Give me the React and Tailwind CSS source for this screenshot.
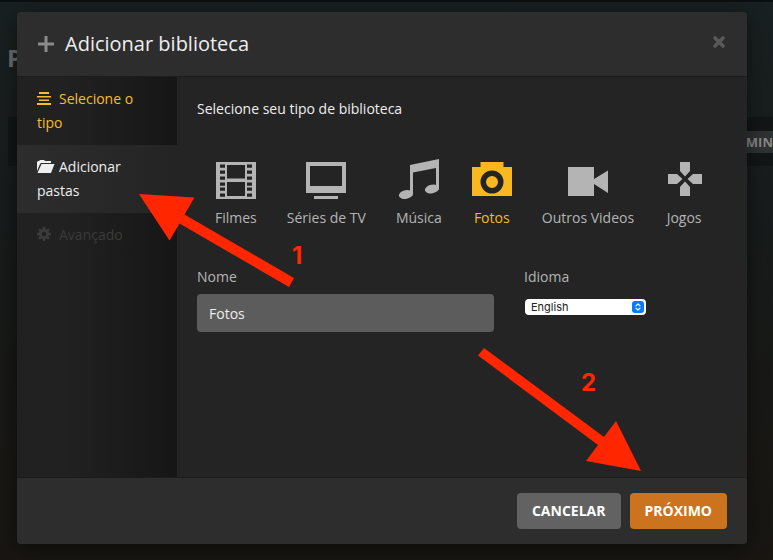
import React, { useState } from "react";

const filmHoles = [4, 10, 16, 22, 27, 33];

function FilmIcon() {
  return (
    <svg width="40" height="40" viewBox="0 0 40 40" aria-hidden="true">
      <path
        fill="currentColor"
        fillRule="evenodd"
        d={
          "M0 2H40V39H0Z M11 5H29V18.500H11Z M11 22H29V36H11Z " +
          filmHoles.map((y) => `M4 ${y + 0.5}h5v3.200h-5z M31 ${y + 0.5}h5v3.200h-5z`).join(" ")
        }
      />
    </svg>
  );
}

function TvIcon() {
  return (
    <svg width="40" height="40" viewBox="0 0 40 40" aria-hidden="true">
      <path fill="currentColor" fillRule="evenodd" d="M0 2H40V33H0Z M4 6V26H36V6Z M8 36H32V39H8Z" />
    </svg>
  );
}

function MusicIcon() {
  return (
    <svg width="40" height="40" viewBox="0 0 40 40" aria-hidden="true">
      <g fill="currentColor">
        <path d="M11 5 40 -1V29H37V8L14 12.500V34H11Z" />
        <ellipse cx="7" cy="34.500" rx="7.200" ry="4.300" transform="rotate(-10 7 34.500)" />
        <ellipse cx="33" cy="29" rx="7.200" ry="4.300" transform="rotate(-10 33 29)" />
      </g>
    </svg>
  );
}

function CameraIcon() {
  return (
    <svg width="40" height="40" viewBox="0 0 40 40" aria-hidden="true">
      <path
        fill="currentColor"
        fillRule="evenodd"
        d="M0 7H8.500V2H31.500V7H40V36H0Z M20 10.500a11.500 11.500 0 1 0 0 23a11.500 11.500 0 1 0 0-23Z M20 16a6 6 0 1 1 0 12a6 6 0 1 1 0-12Z"
      />
    </svg>
  );
}

function VideoIcon() {
  return (
    <svg width="40" height="40" viewBox="0 0 40 40" aria-hidden="true">
      <path fill="currentColor" d="M0 7H26V19L40 10.500V33L26 24V36H0Z" />
    </svg>
  );
}

function GamepadIcon() {
  return (
    <svg width="40" height="40" viewBox="0 0 40 40" aria-hidden="true">
      <path
        fill="currentColor"
        d="M16 2H26V11L21 16.500L16 11Z M16 36H26V27L21 21.500L16 27Z M4 14H13L18.500 19L13 24H4Z M38 14H29L23.500 19L29 24H38Z"
      />
    </svg>
  );
}

const libraryTypes = [
  { name: "Filmes", Icon: FilmIcon },
  { name: "Séries de TV", Icon: TvIcon },
  { name: "Música", Icon: MusicIcon },
  { name: "Fotos", Icon: CameraIcon },
  { name: "Outros Videos", Icon: VideoIcon },
  { name: "Jogos", Icon: GamepadIcon },
];

function LinesIcon() {
  return (
    <svg className="mr-2 inline-block align-[-1px]" width="14" height="13" viewBox="0 0 14 13" aria-hidden="true">
      <path fill="currentColor" d="M2 0H12V2H2Z M0 4H14V5.500H0Z M2 7.500H12V9H2Z M0 11H14V13H0Z" />
    </svg>
  );
}

function FolderIcon() {
  return (
    <svg className="mr-1 inline-block align-[-1px]" width="18" height="13" viewBox="0 0 18 13" aria-hidden="true">
      <path fill="currentColor" d="M0 10V2L1 1H2L3 0H7L8 1H14V3H4L3 4L0 11Z" />
      <path fill="currentColor" d="M4.500 4H17.500L14 13H0.500Z" />
    </svg>
  );
}

function GearIcon() {
  return (
    <svg className="mr-2 inline-block align-[-1px]" width="14" height="14" viewBox="0 0 14 14" aria-hidden="true">
      <circle cx="7" cy="7" r="3.700" fill="none" stroke="currentColor" strokeWidth="3" />
      <path
        stroke="currentColor"
        strokeWidth="2.600"
        d="M7 0V2.500M7 11.500V14M0 7H2.500M11.500 7H14M2.050 2.050 3.800 3.800M10.200 10.200 11.950 11.950M2.050 11.950 3.800 10.200M10.200 3.800 11.950 2.050"
      />
    </svg>
  );
}

function PageBehind() {
  return (
    <div className="absolute inset-0 flex flex-col overflow-hidden border-t-2 border-[#0c0f10] bg-linear-to-b from-[#192021] via-[#171a19] to-[#191612] font-bold text-[#6b6e6e]">
      <p className="mt-10 pl-[7px] text-2xl leading-8">P</p>
      <div className="mt-[43px] ml-2 flex h-[49px] items-center justify-end bg-[#121616]">
        <span className="bg-[#2e3232] pl-2 text-[13px] leading-[22px] text-[#858888]">MIN</span>
      </div>
    </div>
  );
}

function Annotations() {
  return (
    <div className="pointer-events-none absolute inset-0 font-['Inter','Liberation_Sans',sans-serif] text-2xl leading-6 font-bold text-[#ff2600]">
      <svg className="absolute top-0 left-0" width="773" height="560" viewBox="0 0 773 560" aria-hidden="true">
        <path
          fill="currentColor"
          d="M139 194 194.500 197.500 184.500 214.500 294 278 289 287 179.500 223.500 169.500 240.500Z M641 471 586 461 598 445 478 355.500 484 348 604 437 616 421Z"
        />
      </svg>
      <span className="absolute top-[244px] left-[292px]">1</span>
      <span className="absolute top-[371px] left-[581px]">2</span>
    </div>
  );
}

export default function App() {
  const [selected, setSelected] = useState("Fotos");
  const [name, setName] = useState("Fotos");

  return (
    <div className="relative min-h-screen pt-3 pr-[26px] pb-4 pl-[17px] font-['Open_Sans','Noto_Sans',sans-serif] text-sm text-[#b4b4b4]">
      <PageBehind />
      <section
        role="dialog"
        aria-labelledby="dialog-title"
        className="relative overflow-hidden rounded-[4px] bg-[#242424] shadow-[0_5px_20px_rgba(0,0,0,0.5)]"
      >
        <header className="flex h-[65px] items-center border-b border-[#1c1c1c] bg-[#2d2d2d] px-5">
          <svg className="mr-[11px] ml-px" width="16" height="16" viewBox="0 0 16 16" aria-hidden="true">
            <path stroke="#8b8b8b" strokeWidth="3" d="M8 0V16M0 8H16" />
          </svg>
          <h1 id="dialog-title" className="flex-1 text-xl text-[#eeeeee]">
            Adicionar biblioteca
          </h1>
          <button type="button" aria-label="Fechar" className="mb-1 text-[#595959]">
            <svg width="16" height="16" viewBox="0 0 16 16" aria-hidden="true">
              <path stroke="currentColor" strokeWidth="3.600" strokeLinecap="round" d="M4 4 12 12M12 4 4 12" />
            </svg>
          </button>
        </header>

        <div className="flex min-h-[400px]">
          <nav className="w-40 shrink-0 bg-linear-to-r from-[#212121] from-30% to-[#161616] leading-6">
            <button type="button" className="block w-full px-5 py-[10px] text-left text-[#f9be25]">
              <LinesIcon />
              Selecione o tipo
            </button>
            <button
              type="button"
              className="block w-full bg-linear-to-r from-[#2d2d2d] to-[#242424] px-5 py-[10px] text-left text-[#eeeeee]"
            >
              <FolderIcon />
              Adicionar pastas
            </button>
            <button type="button" disabled className="block w-full px-5 py-[10px] text-left text-[#3a3a3a]">
              <GearIcon />
              Avançado
            </button>
          </nav>

          <div className="min-w-0 flex-1 px-5 pt-5">
            <h2 className="leading-6 text-[#eeeeee]">Selecione seu tipo de biblioteca</h2>
            <div className="mt-[39px] ml-[18px] flex gap-[30px]">
              {libraryTypes.map(({ name: label, Icon }) => (
                <button
                  key={label}
                  type="button"
                  aria-pressed={selected === label}
                  onClick={() => setSelected(label)}
                  className={
                    "flex min-w-10 shrink-0 flex-col items-center gap-[6px] leading-6 [&>svg]:overflow-visible " +
                    (selected === label ? "text-[#f9b81f]" : "text-[#b4b4b4]")
                  }
                >
                  <Icon />
                  {label}
                </button>
              ))}
            </div>

            <div className="mt-[35px] flex gap-[30px] leading-6">
              <div className="w-[297px]">
                <label htmlFor="library-name">Nome</label>
                <input
                  id="library-name"
                  value={name}
                  onChange={(e) => setName(e.target.value)}
                  className="mt-[5px] block h-[38px] w-full rounded-[4px] bg-[#5c5c5c] px-3 text-[#eeeeee] outline-none"
                />
              </div>
              <div>
                <label htmlFor="library-language">Idioma</label>
                <div className="relative mt-[10px] ml-px w-[121px]">
                  <select
                    id="library-language"
                    className="block h-4 w-full appearance-none rounded-[4px] bg-white pl-[6px] font-['Inter',sans-serif] text-[11px] leading-4 text-[#222222] outline-none"
                  >
                    <option>English</option>
                  </select>
                  <svg
                    className="pointer-events-none absolute top-[2px] right-[2px]"
                    width="12"
                    height="12"
                    viewBox="0 0 12 12"
                    aria-hidden="true"
                  >
                    <rect width="12" height="12" rx="3" fill="#087aff" />
                    <path
                      d="M4 4.800 6 2.800 8 4.800M4 7.200 6 9.200 8 7.200"
                      fill="none"
                      stroke="white"
                      strokeWidth="1.200"
                      strokeLinecap="round"
                      strokeLinejoin="round"
                    />
                  </svg>
                </div>
              </div>
            </div>
          </div>
        </div>

        <footer className="flex h-[67px] items-center justify-end gap-[9px] border-t border-[#1c1c1c] bg-[#2d2d2d] px-5 text-sm font-bold text-white">
          <button type="button" className="h-9 rounded-[4px] bg-[#626262] px-[15px]">
            CANCELAR
          </button>
          <button type="button" className="h-9 rounded-[4px] bg-[#cc7320] px-[15px]">
            PRÓXIMO
          </button>
        </footer>
      </section>
      <Annotations />
    </div>
  );
}
